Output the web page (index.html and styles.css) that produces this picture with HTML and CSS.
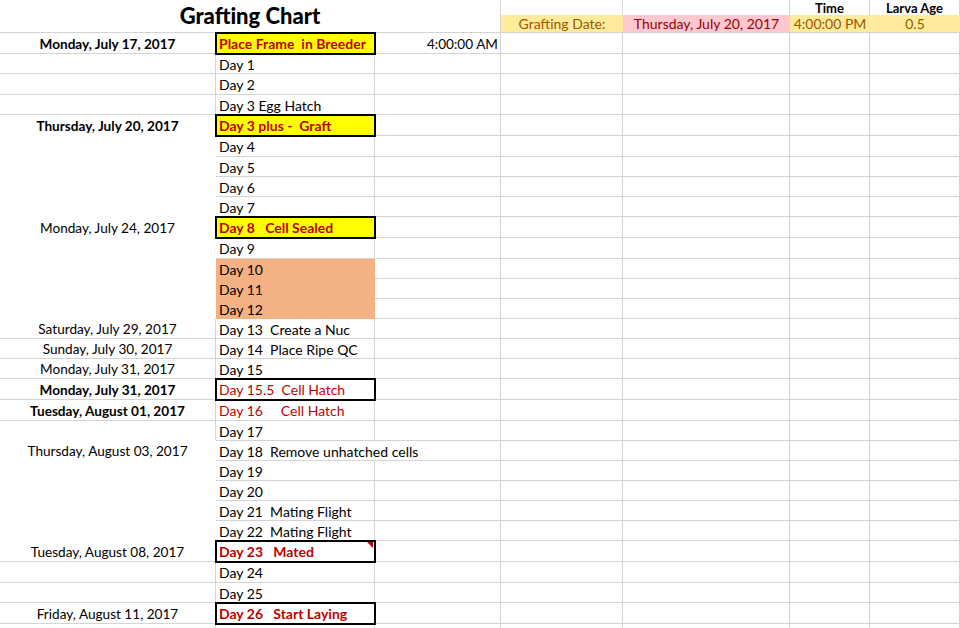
FILE: index.html
```html
<!DOCTYPE html>
<html lang="en">
<head>
    <meta charset="UTF-8">
    <meta name="viewport" content="width=device-width, initial-scale=1.0">
    <title>Grafting Chart</title>
    <link rel="stylesheet" href="styles.css">
</head>
<body>
    <div class="sheet">
        <div class="header">
            <div class="title">Grafting Chart</div>
            <div class="top"></div>
            <div class="top"></div>
            <div class="top label">Time</div>
            <div class="top label">Larva Age</div>
            <div class="info neutral">Grafting Date:</div>
            <div class="info bad">Thursday, July 20, 2017</div>
            <div class="info neutral">4:00:00 PM</div>
            <div class="info neutral">0.5</div>
        </div>
        <div id="rows"></div>
    </div>

    <script>
        // [date, date style, day, day style, time, tall row]
        const rows = [
            ['Monday, July 17, 2017', 'bold', 'Place Frame  in Breeder', 'box hi red bold', '4:00:00 AM', 1],
            ['', '', 'Day 1', '', '', 0],
            ['', '', 'Day 2', '', '', 1],
            ['', '', 'Day 3 Egg Hatch', '', '', 0],
            ['Thursday, July 20, 2017', 'bold nb', 'Day 3 plus -  Graft', 'box hi red bold', '', 1],
            ['', 'w', 'Day 4', '', '', 1],
            ['', 'w', 'Day 5', '', '', 0],
            ['', 'w', 'Day 6', '', '', 0],
            ['', 'w', 'Day 7', '', '', 0],
            ['Monday, July 24, 2017', 'w', 'Day 8   Cell Sealed', 'box hi red bold', '', 1],
            ['', 'w', 'Day 9', '', '', 1],
            ['', 'w', 'Day 10', 'orange', '', 0],
            ['', 'w', 'Day 11', 'orange', '', 0],
            ['', 'w', 'Day 12', 'orange', '', 0],
            ['Saturday, July 29, 2017', '', 'Day 13  Create a Nuc', '', '', 0],
            ['Sunday, July 30, 2017', '', 'Day 14  Place Ripe QC', '', '', 0],
            ['Monday, July 31, 2017', '', 'Day 15', '', '', 0],
            ['Monday, July 31, 2017', 'bold', 'Day 15.5  Cell Hatch', 'box red', '', 1],
            ['Tuesday, August 01, 2017', 'bold', 'Day 16     Cell Hatch', 'red', '', 1],
            ['', 'nb', 'Day 17', '', '', 0],
            ['Thursday, August 03, 2017', 'w', 'Day 18  Remove unhatched cells', 'spill', '', 0],
            ['', 'w', 'Day 19', '', '', 0],
            ['', 'w', 'Day 20', '', '', 0],
            ['', 'w', 'Day 21  Mating Flight', '', '', 0],
            ['', 'w', 'Day 22  Mating Flight', '', '', 0],
            ['Tuesday, August 08, 2017', '', 'Day 23   Mated', 'box red bold note', '', 1],
            ['', '', 'Day 24', '', '', 1],
            ['', '', 'Day 25', '', '', 0],
            ['Friday, August 11, 2017', '', 'Day 26   Start Laying', 'box red bold', '', 1],
            ['', '', '', '', '', 0]
        ];

        function renderRows() {
            const container = document.getElementById('rows');

            rows.forEach(row => {
                const [date, dateStyle, day, dayStyle, time, tall] = row;
                const el = document.createElement('div');
                el.className = tall ? 'row tall' : 'row';
                el.innerHTML = `
                    <div class="cell date ${dateStyle}">${date}</div>
                    <div class="cell day ${dayStyle}">${day}</div>
                    <div class="cell time">${time}</div>
                    <div class="cell"></div>
                    <div class="cell"></div>
                    <div class="cell"></div>
                    <div class="cell"></div>
                `;
                container.appendChild(el);
            });
        }

        renderRows();
    </script>
</body>
</html>
```

FILE: styles.css
```css
* {
    margin: 0;
    padding: 0;
    box-sizing: border-box;
}

body {
    background: #fff;
    font-family: Lato, "Liberation Sans", sans-serif;
    font-size: 14px;
    color: #000;
    overflow: hidden;
}

.sheet {
    width: 960px;
}

.header {
    display: grid;
    grid-template-columns: 501px 122px 167px 80px 90px;
    grid-template-rows: 15px 18px;
}

.title {
    grid-row: 1 / 3;
    border-right: 1px solid #d4d4d4;
    border-bottom: 1px solid #d4d4d4;
    display: flex;
    justify-content: center;
    align-items: center;
    font-size: 22px;
    font-weight: 900;
    padding-bottom: 1px;
}

.top {
    border-right: 1px solid #d4d4d4;
}

.top.label {
    text-align: center;
    font-size: 13px;
    font-weight: bold;
    line-height: 15px;
    padding-top: 1px;
}

.info {
    border-bottom: 1px solid #d4d4d4;
    display: flex;
    justify-content: center;
    align-items: center;
    white-space: nowrap;
}

.neutral {
    background-color: #ffeb9c;
    color: #9c5700;
}

.bad {
    background-color: #ffc7ce;
    color: #9c0006;
}

.row {
    display: grid;
    grid-template-columns: 216px 159px 126px 122px 167px 80px 90px;
    height: 20px;
}

.row.tall {
    height: 21px;
}

.cell {
    border-right: 1px solid #d4d4d4;
    border-bottom: 1px solid #d4d4d4;
    display: flex;
    align-items: center;
    padding: 1px 3px 0;
    white-space: pre;
}

.date {
    justify-content: center;
    font-size: 13.6px;
}

.date.nb {
    border-bottom-color: transparent;
}

.date.w {
    border-color: transparent;
}

.time {
    justify-content: flex-end;
    padding-right: 2px;
    font-size: 13.6px;
}

.bold {
    font-weight: bold;
}

.red {
    color: #c00000;
}

.hi {
    background-color: #ffff00;
}

.orange {
    background-color: #f4b183;
    border-color: #f4b183;
}

.spill {
    border-right-color: transparent;
    overflow: visible;
}

.box {
    position: relative;
    z-index: 1;
    outline: 2px solid #000;
    outline-offset: -1px;
}

.note::after {
    content: "";
    position: absolute;
    top: 1px;
    right: 1px;
    border-top: 6px solid #c00000;
    border-left: 6px solid transparent;
}
```
